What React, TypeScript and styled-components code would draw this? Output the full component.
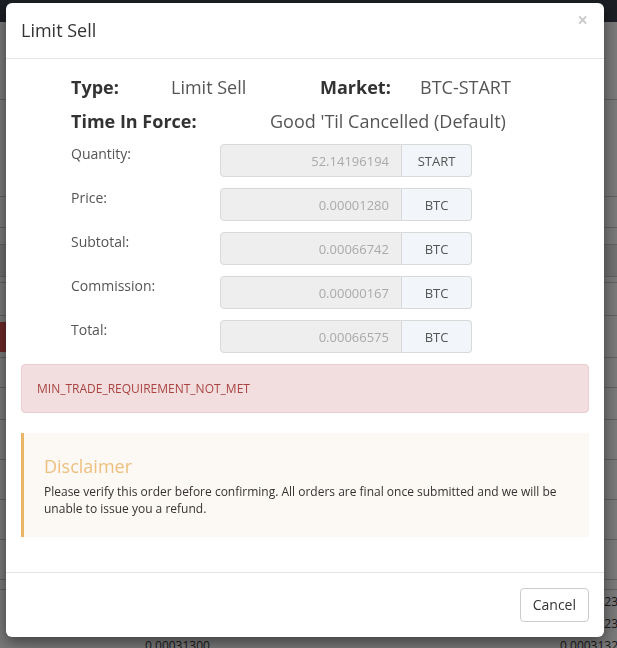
import React from 'react';
import styled, { createGlobalStyle } from 'styled-components';

const GlobalStyle = createGlobalStyle`
  html, body {
    margin: 0;
    padding: 0;
    overflow: hidden;
  }

  body {
    background: #f5f5f5;
    font-family: "Open Sans", "Liberation Sans", sans-serif;
    color: #333;
  }

  * {
    box-sizing: border-box;
  }
`;

/* ---------- page behind the dialog ---------- */

const PageBehind = styled.div`
  width: 617px;
  height: 648px;
  overflow: hidden;
`;

const Navbar = styled.div`
  height: 22px;
  background: #383e48;
`;

const BgRow = styled.div<{ $h: number; $shade?: boolean }>`
  height: ${(p) => p.$h}px;
  border-bottom: 1px solid #c4c4c4;
  background: ${(p) => (p.$shade ? '#e2e2e2' : 'transparent')};
  display: flex;
  align-items: center;
`;

const RedButton = styled.div`
  width: 60px;
  height: 30px;
  margin-left: -20px;
  background: #d9534f;
  border-radius: 4px;
`;

const OrderRow = styled.div`
  height: 22px;
  display: grid;
  grid-template-columns: 415px auto;
  padding-left: 145px;
  align-items: center;
  font-size: 12px;
  color: #333;
  white-space: nowrap;
`;

const Backdrop = styled.div`
  position: fixed;
  inset: 0;
  background: rgba(0, 0, 0, 0.5);
`;

/* ---------- dialog ---------- */

const Modal = styled.div`
  position: fixed;
  top: 3px;
  left: 6px;
  width: 598px;
  background: #fff;
  border-radius: 6px;
  box-shadow: 0 5px 15px rgba(0, 0, 0, 0.5);
`;

const ModalHeader = styled.div`
  padding: 15px;
  border-bottom: 1px solid #e5e5e5;
  display: flex;
  justify-content: space-between;
  align-items: flex-start;
`;

const Title = styled.h4`
  margin: 0;
  font-size: 18px;
  line-height: 25px;
  font-weight: 400;
  color: #333;
`;

const CloseButton = styled.button`
  background: none;
  border: 0;
  padding: 0;
  margin-top: -7px;
  margin-right: 1px;
  font-family: inherit;
  font-size: 19px;
  font-weight: 700;
  line-height: 1;
  color: #000;
  opacity: 0.2;
  cursor: pointer;
`;

const ModalBody = styled.div`
  padding: 15px;
`;

const Summary = styled.div`
  padding-left: 50px;
  margin-bottom: 10px;
`;

const SummaryRow = styled.div<{ $cols: string }>`
  display: grid;
  grid-template-columns: ${(p) => p.$cols};
  font-size: 18px;
  line-height: 26px;
  color: #555;
  white-space: nowrap;

  & + & {
    margin-top: 8px;
  }
`;

const Key = styled.span`
  font-weight: 700;
  color: #333;
`;

const FieldRow = styled.div`
  display: flex;
  padding-left: 50px;
  margin-bottom: 11px;
`;

const FieldLabel = styled.label`
  width: 149px;
  font-size: 14px;
  line-height: 20px;
  color: #555;
`;

const InputGroup = styled.div`
  display: flex;
  width: 252px;
  height: 33px;
`;

const ReadOnlyInput = styled.input`
  width: 182px;
  height: 100%;
  padding: 0 12px;
  border: 1px solid #d9d9d9;
  border-radius: 4px 0 0 4px;
  background: #eee;
  font-family: inherit;
  font-size: 13px;
  color: #aaa;
  text-align: right;
  outline: none;
`;

const Addon = styled.span`
  width: 70px;
  height: 100%;
  border: 1px solid #d9d9d9;
  border-left: 0;
  border-radius: 0 4px 4px 0;
  background: #f2f5f9;
  font-size: 13px;
  color: #555;
  display: flex;
  align-items: center;
  justify-content: center;
`;

const Alert = styled.div`
  padding: 15px;
  margin-bottom: 20px;
  border: 1px solid #ebccd1;
  border-radius: 4px;
  background: #f2dede;
  color: #a94442;
  font-size: 12px;
  line-height: 17px;
`;

const Callout = styled.div`
  padding: 20px;
  margin-bottom: 20px;
  border-left: 3px solid #eab565;
  background: #fcf8f3;
`;

const CalloutTitle = styled.h4`
  margin: 0 0 4px;
  font-size: 18px;
  line-height: 26px;
  font-weight: 400;
  color: #eebf7e;
`;

const CalloutText = styled.p`
  margin: 0;
  font-size: 12px;
  line-height: 17px;
  color: #333;
`;

const ModalFooter = styled.div`
  padding: 15px;
  border-top: 1px solid #e5e5e5;
  display: flex;
  justify-content: flex-end;
`;

const Button = styled.button`
  padding: 6px 12px;
  border: 1px solid #ccc;
  border-radius: 4px;
  background: #fff;
  font-family: inherit;
  font-size: 14px;
  line-height: 20px;
  color: #333;
  cursor: pointer;
`;

const fields = [
  { label: 'Quantity:', value: '52.14196194', unit: 'START' },
  { label: 'Price:', value: '0.00001280', unit: 'BTC' },
  { label: 'Subtotal:', value: '0.00066742', unit: 'BTC' },
  { label: 'Commission:', value: '0.00000167', unit: 'BTC' },
  { label: 'Total:', value: '0.00066575', unit: 'BTC' },
];

const bgRows = [78, 97, 31, 17, 32, 6, 33, 42, 30, 32, 40, 40, 40, 40, 10];

const orders = [
  ['0.00031200', '0.00031234'],
  ['0.00031250', '0.00031230'],
  ['0.00031300', '0.00031320'],
];

export default function App() {
  return (
    <>
      <GlobalStyle />
      <PageBehind>
        <Navbar />
        {bgRows.map((h, i) => (
          <BgRow key={i} $h={h} $shade={i === 4}>
            {i === 7 && <RedButton />}
          </BgRow>
        ))}
        {orders.map(([a, b], i) => (
          <OrderRow key={i}>
            <span>{a}</span>
            <span>{b}</span>
          </OrderRow>
        ))}
      </PageBehind>
      <Backdrop />

      <Modal>
        <ModalHeader>
          <Title>Limit Sell</Title>
          <CloseButton aria-label="Close">×</CloseButton>
        </ModalHeader>

        <ModalBody>
          <Summary>
            <SummaryRow $cols="100px 149px 100px auto">
              <Key>Type:</Key>
              <span>Limit Sell</span>
              <Key>Market:</Key>
              <span>BTC-START</span>
            </SummaryRow>
            <SummaryRow $cols="199px auto">
              <Key>Time In Force:</Key>
              <span>Good 'Til Cancelled (Default)</span>
            </SummaryRow>
          </Summary>

          {fields.map((f) => (
            <FieldRow key={f.label}>
              <FieldLabel>{f.label}</FieldLabel>
              <InputGroup>
                <ReadOnlyInput readOnly value={f.value} />
                <Addon>{f.unit}</Addon>
              </InputGroup>
            </FieldRow>
          ))}

          <Alert>MIN_TRADE_REQUIREMENT_NOT_MET</Alert>

          <Callout>
            <CalloutTitle>Disclaimer</CalloutTitle>
            <CalloutText>
              Please verify this order before confirming. All orders are final once submitted and we will be
              unable to issue you a refund.
            </CalloutText>
          </Callout>
        </ModalBody>

        <ModalFooter>
          <Button>Cancel</Button>
        </ModalFooter>
      </Modal>
    </>
  );
}
